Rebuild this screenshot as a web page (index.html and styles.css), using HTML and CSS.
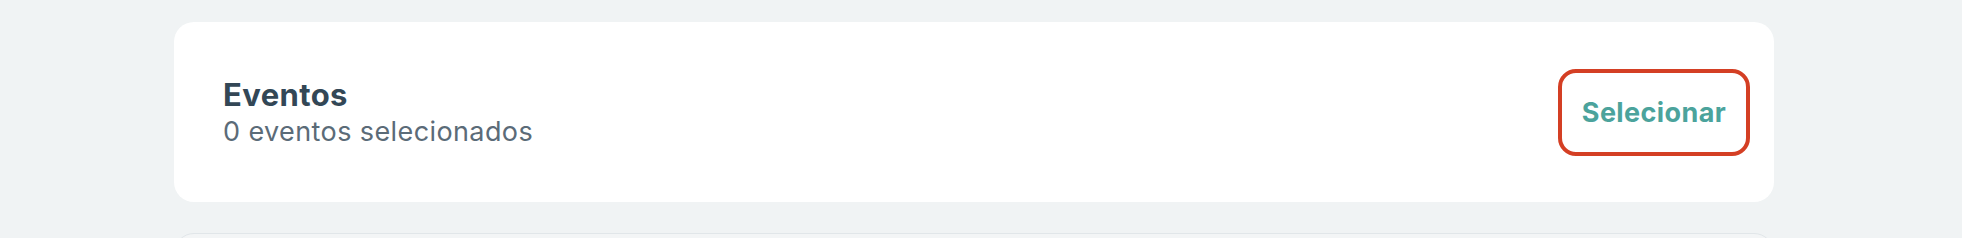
FILE: index.html
```html
<!DOCTYPE html>
<html lang="pt">
<head>
<meta charset="utf-8">
<title>Eventos</title>
<link rel="stylesheet" href="styles.css">
</head>
<body>
<main class="page">
  <section class="card">
    <div class="card-text">
      <h2 class="card-title">Eventos</h2>
      <p class="card-sub">0 eventos selecionados</p>
    </div>
    <button class="select-btn" type="button">Selecionar</button>
  </section>
  <section class="card card-next"></section>
</main>
</body>
</html>
```
FILE: styles.css
```css
html, body {
  margin: 0;
  padding: 0;
  background: #f0f3f4;
  font-family: "Inter", "DejaVu Sans", sans-serif;
  overflow: hidden;
}
.page {
  padding: 22px 0 0 174px;
  display: flex;
  flex-direction: column;
  gap: 31px;
}
.card {
  width: 1600px;
  height: 180px;
  box-sizing: border-box;
  background: #ffffff;
  border-radius: 20px;
  display: flex;
  align-items: center;
  justify-content: space-between;
  padding: 0 24px 0 49px;
}
.card-next {
  height: 40px;
  border: 1px solid #e1e6e9;
  background: #f3f5f6;
}
.card-text {
  display: flex;
  flex-direction: column;
  padding-top: 2px;
}
.card-title {
  margin: 0;
  font-size: 31px;
  line-height: 38px;
  font-weight: 700;
  letter-spacing: 0.4px;
  color: #334756;
}
.card-sub {
  margin: 0;
  font-size: 27px;
  line-height: 36px;
  font-weight: 400;
  letter-spacing: 0.4px;
  color: #5b6b78;
}
.select-btn {
  width: 192px;
  height: 87px;
  box-sizing: border-box;
  border: 4px solid #d43f24;
  border-radius: 18px;
  background: #ffffff;
  color: #4ba39c;
  font-family: inherit;
  font-size: 27px;
  font-weight: 700;
  letter-spacing: 0.4px;
  padding: 0;
}
```
